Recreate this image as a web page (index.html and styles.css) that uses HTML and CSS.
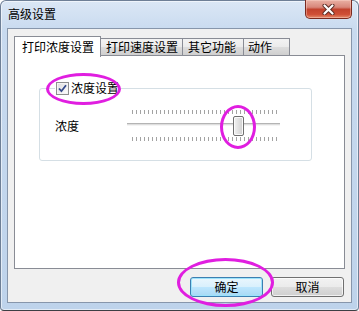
FILE: index.html
```
<!DOCTYPE html>
<html lang="zh">
<head>
    <meta charset="UTF-8">
    <title>高级设置</title>
    <link rel="stylesheet" href="styles.css">
</head>
<body>

<div class="window">
    <div class="titlebar">
        <span class="title">高级设置</span>
        <span class="close-button">
            <svg width="13" height="11" viewBox="0 0 13 11">
                <path d="M2.5 1.5 L10.5 9.5 M10.5 1.5 L2.5 9.5" stroke="#5a2a22" stroke-width="4" stroke-linecap="round"/>
                <path d="M2.5 1.5 L10.5 9.5 M10.5 1.5 L2.5 9.5" stroke="#ffffff" stroke-width="2.2" stroke-linecap="round"/>
            </svg>
        </span>
    </div>

    <div class="client">
        <div class="tabs">
            <div class="tab active">打印浓度设置</div>
            <div class="tab tab-speed">打印速度设置</div>
            <div class="tab tab-other">其它功能</div>
            <div class="tab tab-action">动作</div>
        </div>

        <div class="panel">
            <fieldset class="group">
                <legend>
                    <span class="checkbox">
                        <svg width="9" height="9" viewBox="0 0 9 9">
                            <path d="M1 4.5 L3.4 7.2 L8 1.2" fill="none" stroke="#34498a" stroke-width="1.8"/>
                        </svg>
                    </span>
                    浓度设置
                </legend>
                <div class="row">
                    <span class="label">浓度</span>
                    <div class="slider">
                        <div class="ticks"></div>
                        <div class="track"></div>
                        <div class="ticks ticks-bottom"></div>
                        <span class="thumb"></span>
                    </div>
                </div>
            </fieldset>
        </div>

        <div class="buttons">
            <button class="btn btn-default">确定</button>
            <button class="btn">取消</button>
        </div>
    </div>

    <!-- highlight rings drawn over the dialog -->
    <span class="mark mark-check"></span>
    <span class="mark mark-thumb"></span>
    <span class="mark mark-ok"></span>
</div>

</body>
</html>
```

FILE: styles.css
```
html, body {
    margin: 0;
    padding: 0;
    background: #ffffff;
    font-family: "Noto Sans CJK SC", "Liberation Sans", sans-serif;
    font-size: 12px;
    color: #000;
}

.window {
    position: relative;
    box-sizing: border-box;
    width: 359px;
    height: 311px;
    padding: 0 6px 7px 6px;
    border: 1px solid #6e7f96;
    border-bottom-color: #3c3f44;
    border-radius: 6px 6px 4px 4px;
    background: linear-gradient(to bottom, #dbe7f5 0, #c8daef 30px, #bed3eb 100%);
    box-shadow: inset 0 0 0 1px rgba(255, 255, 255, 0.55);
    display: flex;
    flex-direction: column;
}

.titlebar {
    height: 27px;
    display: flex;
    align-items: flex-start;
}

.title {
    padding: 5px 0 0 1px;
    line-height: 16px;
}

.close-button {
    margin: -1px 0 0 auto;
    box-sizing: border-box;
    width: 47px;
    height: 19px;
    border: 1px solid #7a2a1f;
    border-top: none;
    border-radius: 0 0 5px 5px;
    background: linear-gradient(to bottom, #eab1a4 0, #d8877a 40%, #c2432e 52%, #cf4f36 80%, #e48c6c 100%);
    box-shadow: inset 0 0 0 1px rgba(255, 220, 210, 0.4);
    display: flex;
    align-items: center;
    justify-content: center;
}

.client {
    flex: 1;
    border: 1px solid #8796ab;
    background: #f0f0f0;
    padding: 7px 6px 5px 6px;
    display: flex;
    flex-direction: column;
}

.tabs {
    display: flex;
    align-items: flex-end;
    height: 19px;
}

.tab {
    box-sizing: border-box;
    height: 17px;
    border: 1px solid #898c95;
    border-bottom: none;
    border-left: none;
    background: linear-gradient(to bottom, #f3f3f3 0, #ebebeb 50%, #dddddd 51%, #cfcfcf 100%);
    line-height: 15px;
    padding-left: 5px;
    white-space: nowrap;
}

.tab.active {
    position: relative;
    z-index: 1;
    width: 87px;
    height: 21px;
    margin-bottom: -2px;
    border-left: 1px solid #898c95;
    background: #ffffff;
    padding: 2px 0 0 7px;
    line-height: 15px;
}

.tab-speed {
    width: 82px;
}

.tab-other {
    width: 61px;
    padding-left: 5px;
}

.tab-action {
    width: 46px;
    padding-left: 4px;
}

.panel {
    box-sizing: border-box;
    height: 214px;
    border: 1px solid #898c95;
    background: #ffffff;
    padding: 0;
}

.group {
    box-sizing: border-box;
    width: 273px;
    margin: 25px 0 0 24px;
    padding: 13px 15px 18px 15px;
    border: 1px solid #d5dfe5;
    border-radius: 3px;
}

.group legend {
    display: flex;
    align-items: center;
    height: 14px;
    padding: 0 2px 0 1px;
    line-height: 14px;
}

.checkbox {
    box-sizing: border-box;
    width: 13px;
    height: 13px;
    margin: 1px 2px 0 0;
    border: 1px solid #8e8f8f;
    background: linear-gradient(to bottom right, #dcdcdc, #ffffff);
    box-shadow: inset 0 0 0 1px #f4f4f4;
    display: flex;
    align-items: center;
    justify-content: center;
}

.row {
    display: flex;
    align-items: center;
}

.label {
    width: 72px;
    padding-top: 1px;
}

.slider {
    position: relative;
    width: 153px;
    height: 34px;
    box-sizing: border-box;
    padding-top: 2px;
}

.ticks {
    height: 4px;
    margin: 0 3px 0 5px;
    background: repeating-linear-gradient(to right, #a3a3a3 0, #a3a3a3 1px, transparent 1px, transparent 4px);
}

.track {
    box-sizing: border-box;
    height: 3px;
    margin-top: 9px;
    border-top: 1px solid #b4b4b4;
    border-bottom: 1px solid #f4f4f4;
    background: #dedede;
}

.ticks-bottom {
    margin-top: 11px;
}

.thumb {
    position: absolute;
    left: 106px;
    top: 8px;
    box-sizing: border-box;
    width: 11px;
    height: 20px;
    border: 1px solid #6f6f6f;
    border-radius: 2px;
    background: linear-gradient(to right, #f2f2f2 0, #e0e0e0 50%, #cfcfcf 100%);
    box-shadow: inset 0 0 0 1px #fafafa;
}

.buttons {
    display: flex;
    justify-content: flex-end;
    gap: 8px;
    margin-top: 8px;
    padding-right: 1px;
}

.btn {
    box-sizing: border-box;
    width: 73px;
    height: 20px;
    padding: 0;
    border: 1px solid #707070;
    border-radius: 3px;
    background: linear-gradient(to bottom, #f2f2f2 0, #ebebeb 50%, #dddddd 51%, #cfcfcf 100%);
    box-shadow: inset 0 0 0 1px rgba(255, 255, 255, 0.7);
    font-family: "Noto Sans CJK SC", "Liberation Sans", sans-serif;
    font-size: 12px;
    line-height: 16px;
    color: #000;
}

.btn-default {
    border-color: #3c7fb1;
    background: linear-gradient(to bottom, #eaf6fd 0, #d9f0fc 50%, #bee6fd 51%, #a7d9f5 100%);
    box-shadow: inset 0 0 0 1px #9ce3fb;
}

.mark {
    position: absolute;
    box-sizing: border-box;
    border: 3px solid #e01ee0;
    border-radius: 50%;
    z-index: 5;
}

.mark-check {
    left: 45px;
    top: 72px;
    width: 75px;
    height: 32px;
}

.mark-thumb {
    left: 219px;
    top: 104px;
    width: 36px;
    height: 44px;
}

.mark-ok {
    left: 176px;
    top: 257px;
    width: 97px;
    height: 49px;
}
```
